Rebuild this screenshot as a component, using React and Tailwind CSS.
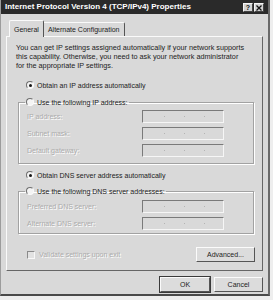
import React from "react";

function Radio({ checked }) {
  return (
    <span className="w-[8px] h-[8px] rounded-full bg-[#f4f4f4] border border-t-[#6e6e6e] border-l-[#6e6e6e] border-r-[#fafafa] border-b-[#fafafa] flex items-center justify-center shrink-0">
      {checked && <span className="w-[3px] h-[3px] rounded-full bg-[#151515]" />}
    </span>
  );
}

function Box() {
  return (
    <div className="w-[82px] h-[13px] border border-t-[#7a7a7a] border-l-[#7a7a7a] border-r-[#f6f6f6] border-b-[#f6f6f6] flex items-center pl-[21px] gap-[19px]">
      <span className="w-[1px] h-[1px] bg-[#b4b4b4]" />
      <span className="w-[1px] h-[1px] bg-[#b4b4b4]" />
      <span className="w-[1px] h-[1px] bg-[#b4b4b4]" />
    </div>
  );
}

function FieldRow({ label }) {
  return (
    <div className="flex items-center h-[13px] mb-[4px]">
      <span className="w-[115px] text-[#ababab] [text-shadow:1px_1px_0_#ffffff]">{label}</span>
      <Box />
    </div>
  );
}

function Btn({ children, w, strong }) {
  return (
    <div
      className={`${w} h-[15px] flex items-center justify-center bg-[#dcdcdc] border border-t-[#fbfbfb] border-l-[#fbfbfb] border-r-[#555555] border-b-[#555555] ${
        strong ? "outline outline-1 outline-[#3a3a3a]" : ""
      }`}
    >
      {children}
    </div>
  );
}

export default function App() {
  return (
    <div className="w-[273px] h-[300px] bg-[#eeeeee] overflow-hidden font-['Liberation_Sans',Arial,sans-serif] text-[7px] leading-[9px] text-[#1c1c1c]">
      <div className="w-[270px] h-[296px] bg-[#d9d9d9] border-l border-l-[#9c9c9c] border-r-2 border-r-[#6a6a6a] border-b-2 border-b-[#4a4a4a] flex flex-col">
        {/* Title bar */}
        <div className="h-[14px] bg-[#2a2a2a] flex items-center pl-[4px] pr-[4px] shrink-0">
          <span className="text-white font-bold text-[8px] leading-[10px] flex-1 whitespace-nowrap">
            Internet Protocol Version 4 (TCP/IPv4) Properties
          </span>
          <div className="flex mt-[1px]">
            <div className="w-[10px] h-[9px] bg-[#d2d2d2] border border-t-[#f5f5f5] border-l-[#f5f5f5] border-r-[#444] border-b-[#444] flex items-center justify-center text-[#111] font-bold text-[7px] leading-none">
              ?
            </div>
            <div className="w-[10px] h-[9px] ml-[1px] bg-[#d2d2d2] border border-t-[#f5f5f5] border-l-[#f5f5f5] border-r-[#444] border-b-[#444] flex items-center justify-center">
              <svg width="6" height="6" viewBox="0 0 6 6">
                <path d="M0.5 0.5 L5.5 5.5 M5.5 0.5 L0.5 5.5" stroke="#111" strokeWidth="1.3" />
              </svg>
            </div>
          </div>
        </div>

        {/* Tabs */}
        <div className="flex items-end h-[16px] mt-[6px] ml-[8px] shrink-0">
          <div className="relative z-10 h-[17px] -mb-[1px] px-[4px] flex items-start pt-[4px] bg-[#d9d9d9] border-t border-l border-t-[#fafafa] border-l-[#fafafa] border-r border-r-[#555] rounded-t-[2px]">
            General
          </div>
          <div className="h-[14px] px-[4px] flex items-center border-t border-t-[#fafafa] border-r border-r-[#555] rounded-tr-[2px]">
            Alternate Configuration
          </div>
        </div>

        {/* Panel */}
        <div className="ml-[5px] w-[257px] h-[235px] border border-t-[#fafafa] border-l-[#fafafa] border-r-[#666] border-b-[#666] flex flex-col pt-[5.5px] shrink-0">
          <p className="ml-[9px] w-[244px] whitespace-nowrap text-[7.25px]">
            You can get IP settings assigned automatically if your network supports
            <br />
            this capability. Otherwise, you need to ask your network administrator
            <br />
            for the appropriate IP settings.
          </p>

          <div className="ml-[19px] mt-[11px] h-[9px] flex items-center gap-[3px]">
            <Radio checked />
            <span>Obtain an IP address automatically</span>
          </div>

          <fieldset className="ml-[11px] mt-[8px] w-[236px] h-[66px] border border-[#a2a2a2] shadow-[inset_1px_1px_0_#ffffff,1px_1px_0_#ffffff] px-[8px] pt-[3.5px]">
            <legend className="-ml-[2px] px-[1px] h-[9px] leading-[9px]">
              <span className="flex items-center gap-[3px] h-[9px]">
                <Radio />
                <span>Use the following IP address:</span>
              </span>
            </legend>
            <FieldRow label="IP address:" />
            <FieldRow label="Subnet mask:" />
            <FieldRow label="Default gateway:" />
          </fieldset>

          <div className="ml-[19px] mt-[7px] h-[9px] flex items-center gap-[3px]">
            <Radio checked />
            <span>Obtain DNS server address automatically</span>
          </div>

          <fieldset className="ml-[11px] mt-[7px] w-[236px] h-[47.5px] border border-[#a2a2a2] shadow-[inset_1px_1px_0_#ffffff,1px_1px_0_#ffffff] px-[8px] pt-[4.5px]">
            <legend className="-ml-[2px] px-[1px] h-[9px] leading-[9px]">
              <span className="flex items-center gap-[3px] h-[9px]">
                <Radio />
                <span>Use the following DNS server addresses:</span>
              </span>
            </legend>
            <FieldRow label="Preferred DNS server:" />
            <FieldRow label="Alternate DNS server:" />
          </fieldset>

          <div className="mt-[13px] h-[15px] flex items-center justify-between pl-[20px] pr-[7px]">
            <div className="flex items-center gap-[4px]">
              <span className="w-[8px] h-[8px] bg-[#e2e2e2] border border-t-[#8a8a8a] border-l-[#8a8a8a] border-r-[#f8f8f8] border-b-[#f8f8f8]" />
              <span className="text-[#ababab] [text-shadow:1px_1px_0_#ffffff]">Validate settings upon exit</span>
            </div>
            <Btn w="w-[59px]">Advanced...</Btn>
          </div>
        </div>

        {/* Bottom buttons */}
        <div className="flex justify-end gap-[4px] mt-[6px] pr-[5px]">
          <Btn w="w-[50px]" strong>OK</Btn>
          <Btn w="w-[49px]">Cancel</Btn>
        </div>
      </div>
    </div>
  );
}
